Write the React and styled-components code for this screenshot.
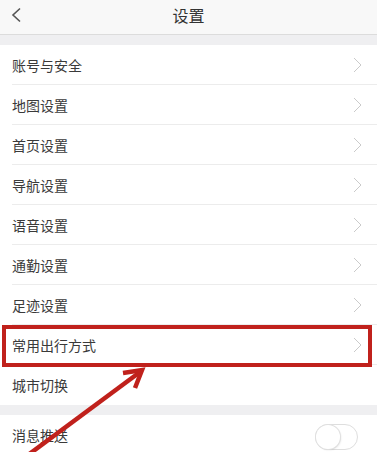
import React from "react";
import styled, { createGlobalStyle } from "styled-components";

const GlobalStyle = createGlobalStyle`
  html, body {
    margin: 0;
    padding: 0;
    background: #efeff1;
  }
  body {
    font-family: "Noto Sans CJK SC", "Noto Sans", sans-serif;
    color: #333;
    overflow: hidden;
  }
`;

const Page = styled.div`
  width: 377px;
  height: 452px;
  position: relative;
  overflow: hidden;
  background: #efeff1;
`;

const Header = styled.header`
  height: 34px;
  background: #f8f8f8;
  border-bottom: 1px solid #dcdcdc;
  display: flex;
  align-items: center;
  justify-content: center;
  position: relative;
`;

const BackButton = styled.div`
  position: absolute;
  left: 10px;
  top: 7px;
  width: 14px;
  height: 16px;
  display: flex;
`;

const Title = styled.h1`
  margin: 0;
  font-size: 16px;
  font-weight: 400;
  color: #333;
  line-height: 1;
  margin-top: -5px;
`;

const Group = styled.section`
  background: #fff;
  margin-top: 10px;
`;

const Row = styled.div`
  height: 40px;
  display: flex;
  align-items: center;
  justify-content: space-between;
  padding: 0 15px 0 12px;
  position: relative;
  &::after {
    content: "";
    position: absolute;
    left: 12px;
    right: 0;
    bottom: 0;
    height: 1px;
    background: ${(p) => (p.$last ? "transparent" : "#ececec")};
  }
`;

const Label = styled.span`
  font-size: 14px;
  color: #3a3a3a;
  line-height: 1;
`;

const Highlight = styled.div`
  position: absolute;
  left: 2px;
  right: 5px;
  top: 0;
  bottom: -2px;
  border: 4px solid #c0211c;
  pointer-events: none;
  z-index: 2;
`;

const Toggle = styled.div`
  width: 41px;
  height: 24px;
  border: 1px solid #dedede;
  border-radius: 13px;
  background: #fff;
  position: relative;
  margin-right: 4px;
  margin-top: 4px;
  &::before {
    content: "";
    position: absolute;
    left: 0;
    top: 0;
    width: 24px;
    height: 24px;
    border-radius: 50%;
    box-shadow: 0 0 0 1px #e0e0e0, 1px 1px 2px rgba(0, 0, 0, 0.12);
    background: #fff;
  }
`;

const ArrowLayer = styled.svg`
  position: absolute;
  left: 0;
  top: 0;
  pointer-events: none;
  z-index: 3;
`;

const Chevron = () => (
  <svg width="9" height="16" viewBox="0 0 9 16">
    <polyline points="1,1 8,8 1,15" fill="none" stroke="#cacaca" strokeWidth="1" />
  </svg>
);

const items = [
  "账号与安全",
  "地图设置",
  "首页设置",
  "导航设置",
  "语音设置",
  "通勤设置",
  "足迹设置",
  "常用出行方式",
  "城市切换",
];

export default function App() {
  return (
    <Page>
      <GlobalStyle />
      <Header>
        <BackButton>
          <svg width="14" height="16" viewBox="0 0 14 16">
            <polyline points="10,1.5 3,8 10,14.5" fill="none" stroke="#555" strokeWidth="1.6" />
          </svg>
        </BackButton>
        <Title>设置</Title>
      </Header>

      <Group>
        {items.map((name, i) => (
          <Row key={name} $last={i === items.length - 1}>
            <Label>{name}</Label>
            {name !== "城市切换" && <Chevron />}
            {name === "常用出行方式" && <Highlight />}
          </Row>
        ))}
      </Group>

      <Group>
        <Row $last>
          <Label>消息推送</Label>
          <Toggle />
        </Row>
      </Group>

      <ArrowLayer width="377" height="452" viewBox="0 0 377 452">
        <line x1="28" y1="455" x2="140" y2="372" stroke="#c0211c" strokeWidth="4.5" />
        <polyline
          points="123,373 142,370 135,388"
          fill="none"
          stroke="#c0211c"
          strokeWidth="4.5"
          strokeLinejoin="miter"
        />
      </ArrowLayer>
    </Page>
  );
}
